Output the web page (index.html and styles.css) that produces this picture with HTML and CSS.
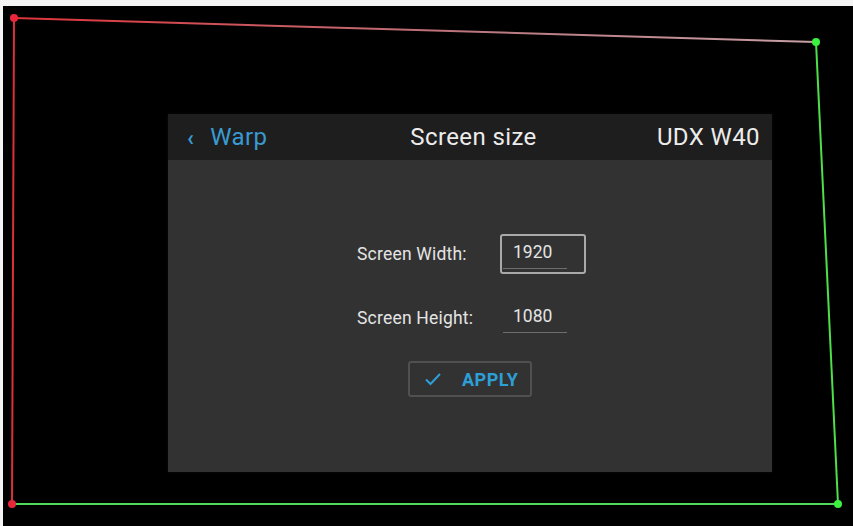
FILE: index.html
```html
<!DOCTYPE html>
<html lang="en">
<head>
    <meta charset="UTF-8">
    <meta name="viewport" content="width=device-width, initial-scale=1.0">
    <title>Screen size</title>
    <link rel="stylesheet" href="styles.css">
</head>
<body>
    <div class="frame">
        <!-- warp corner overlay -->
        <svg class="warp-lines" width="853" height="520" viewBox="0 0 853 520">
            <defs>
                <linearGradient id="topGrad" x1="0" y1="0" x2="1" y2="0">
                    <stop offset="0" stop-color="#e0343a"/>
                    <stop offset="0.6" stop-color="#b97a82"/>
                    <stop offset="1" stop-color="#c9a0a4"/>
                </linearGradient>
            </defs>
            <line x1="14" y1="12" x2="816" y2="36" stroke="url(#topGrad)" stroke-width="2"/>
            <line x1="14" y1="12" x2="12" y2="498" stroke="#d9303a" stroke-width="2"/>
            <line x1="816" y1="36" x2="838" y2="498" stroke="#4ee04a" stroke-width="2"/>
            <line x1="12" y1="498" x2="838" y2="498" stroke="#52d95a" stroke-width="2"/>
            <circle cx="14" cy="12" r="4" fill="#e8283a"/>
            <circle cx="816" cy="36" r="4" fill="#3cf040"/>
            <circle cx="838" cy="498" r="4" fill="#3cf040"/>
            <circle cx="12" cy="498" r="4" fill="#e8283a"/>
        </svg>

        <div class="panel">
            <div class="panel-header">
                <div class="back"><span class="chev">&#8249;</span>Warp</div>
                <div class="title">Screen size</div>
                <div class="device">UDX W40</div>
            </div>
            <div class="panel-body">
                <div class="field">
                    <span class="label">Screen Width:</span>
                    <div class="input focused"><span class="value">1920</span></div>
                </div>
                <div class="field">
                    <span class="label">Screen Height:</span>
                    <div class="input"><span class="value">1080</span></div>
                </div>
                <button class="apply">
                    <svg width="18" height="14" viewBox="0 0 18 14"><path d="M2 7.5 L6.5 12 L16 2" fill="none" stroke="#2e9fd6" stroke-width="2"/></svg>
                    <span>APPLY</span>
                </button>
            </div>
        </div>
    </div>
</body>
</html>
```

FILE: styles.css
```css
html, body {
    margin: 0;
    height: 100%;
}
body {
    background: #f4f4f4;
    font-family: Roboto, "Liberation Sans", sans-serif;
    padding: 6px 0 0 3px;
    box-sizing: border-box;
    overflow: hidden;
}
.frame {
    position: relative;
    background: #000;
    height: 520px;
    padding: 108px 0 0 165px;
    box-sizing: border-box;
}
.warp-lines {
    position: absolute;
    left: -3px;
    top: 0;
}
.panel {
    width: 604px;
    height: 358px;
    background: #323232;
    display: flex;
    flex-direction: column;
    box-shadow: 0 0 3px rgba(255, 255, 255, 0.05);
}
.panel-header {
    height: 46px;
    background: #1e1e1e;
    display: flex;
    align-items: center;
    justify-content: space-between;
    padding: 0 12px 0 19px;
    font-size: 24px;
    letter-spacing: 0.4px;
    color: #ececec;
}
.panel-header > div {
    flex: 1;
}
.back {
    color: #3a9ad2;
}
.chev {
    font-size: 22px;
    font-weight: bold;
    margin-right: 16px;
}
.title {
    text-align: center;
}
.device {
    text-align: right;
}
.panel-body {
    flex: 1;
    display: flex;
    flex-direction: column;
    align-items: center;
    padding-top: 74px;
    padding-left: 4px;
}
.field {
    display: flex;
    align-items: center;
    width: 230px;
    height: 40px;
    margin-bottom: 24px;
    color: #e4e4e4;
    font-size: 17.5px;
}
.label {
    width: 143px;
    letter-spacing: 0.2px;
}
.input {
    width: 86px;
    height: 40px;
    box-sizing: border-box;
    position: relative;
    padding: 0 0 0 11px;
    display: flex;
    align-items: center;
    border: 2px solid transparent;
    border-radius: 3px;
}
.input.focused {
    border-color: #a9a9a9;
}
.input::after {
    content: "";
    position: absolute;
    left: 1px;
    bottom: 3px;
    width: 64px;
    height: 1px;
    background: #6d6d6d;
}
.value {
    margin-top: -5px;
}
.apply {
    margin-top: -1px;
    margin-left: -4px;
    width: 124px;
    height: 36px;
    background: transparent;
    border: 2px solid #505050;
    border-radius: 3px;
    display: flex;
    align-items: center;
    padding: 0 0 0 14px;
    gap: 20px;
    color: #2e9fd6;
    font-family: Roboto, "Liberation Sans", sans-serif;
    font-size: 18px;
    letter-spacing: 0.5px;
    font-weight: bold;
}
```
